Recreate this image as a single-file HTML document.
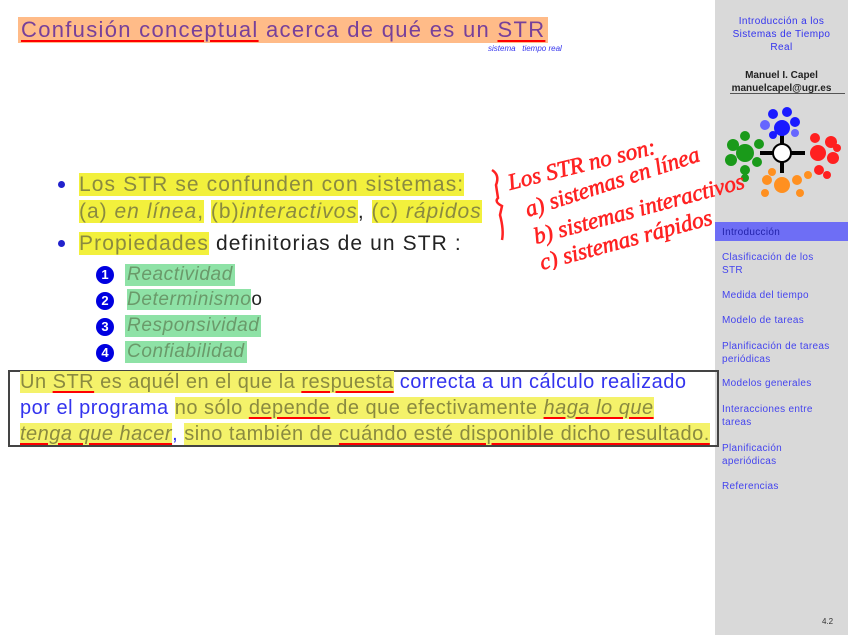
<!DOCTYPE html>
<html><head><meta charset="utf-8">
<style>
*{margin:0;padding:0;box-sizing:border-box}
body{width:848px;height:635px;overflow:hidden;background:#fff;font-family:"Liberation Sans",sans-serif;position:relative}
.abs{position:absolute;white-space:nowrap}
.side{position:absolute;left:715px;top:0;width:133px;height:635px;background:#d9d9d9}
.hlY{background:#f2f03c}
.hlG{background:#8ee2a6}
.ul{text-decoration:underline;text-decoration-color:#f00;text-decoration-thickness:2px;text-underline-offset:3px}
.nav{position:absolute;left:722px;font-size:10px;color:#4444ee;line-height:13px;letter-spacing:0.3px;white-space:nowrap}
.num{position:absolute;left:96px;width:18px;height:18px;border-radius:50%;background:#0000e0;color:#fff;font-size:13px;font-weight:bold;text-align:center;line-height:18px}
.en{position:absolute;left:125px;font-size:19px;font-style:italic;color:#6a9a6a;padding:0 2px;letter-spacing:0.6px;line-height:22px}
.bul{position:absolute;left:58px;width:7px;height:7px;border-radius:50%;background:#2222cc}
.box{position:absolute;left:8px;top:370px;width:711px;height:77px;border:2px solid #444}
.bl{position:absolute;left:20px;font-size:20px;color:#3333ee;white-space:nowrap;letter-spacing:0.5px;line-height:24px}
.y{background:#f4f26a;color:#8a8a40}
.bt{position:absolute;left:79px;font-size:21px;line-height:25px;letter-spacing:1.1px;white-space:nowrap}
</style></head><body>
<div class="side"></div>
<div class="abs" style="left:715px;width:133px;top:15px;text-align:center;font-size:10px;color:#3333ee;line-height:13px;letter-spacing:0.4px">Introducción a los<br>Sistemas de Tiempo<br>Real</div>
<div class="abs" style="left:715px;width:133px;top:69px;text-align:center;font-size:10px;color:#222;font-weight:bold;line-height:13px">Manuel I. Capel<br>manuelcapel@ugr.es</div>
<div class="abs" style="left:730px;top:93px;width:115px;height:1px;background:#555"></div>
<svg class="abs" style="left:715px;top:100px" width="133" height="100">
<g stroke="#000" stroke-width="4"><line x1="67" y1="35" x2="67" y2="73"/><line x1="45" y1="53" x2="90" y2="53"/></g>
<circle cx="67" cy="53" r="9" fill="#fff" stroke="#000" stroke-width="2"/>
<g fill="#1a1aff"><circle cx="67" cy="28" r="8"/><circle cx="58" cy="14" r="5"/><circle cx="72" cy="12" r="5"/><circle cx="80" cy="22" r="5"/><circle cx="50" cy="25" r="5" fill="#6666ff"/><circle cx="80" cy="33" r="4" fill="#6666ff"/><circle cx="58" cy="35" r="4"/></g>
<g fill="#1a9a1a"><circle cx="30" cy="53" r="9"/><circle cx="18" cy="45" r="6"/><circle cx="16" cy="60" r="6"/><circle cx="30" cy="36" r="5"/><circle cx="30" cy="70" r="5"/><circle cx="44" cy="44" r="5"/><circle cx="42" cy="62" r="5"/><circle cx="30" cy="78" r="4"/></g>
<g fill="#ff2020"><circle cx="103" cy="53" r="8"/><circle cx="116" cy="42" r="6"/><circle cx="118" cy="58" r="6"/><circle cx="100" cy="38" r="5"/><circle cx="104" cy="70" r="5"/><circle cx="112" cy="75" r="4"/><circle cx="122" cy="48" r="4"/></g>
<g fill="#ff9020"><circle cx="67" cy="85" r="8"/><circle cx="52" cy="80" r="5"/><circle cx="82" cy="80" r="5"/><circle cx="50" cy="93" r="4"/><circle cx="85" cy="93" r="4"/><circle cx="57" cy="72" r="4"/><circle cx="93" cy="75" r="4"/></g>
</svg>
<div class="abs" style="left:715px;top:222px;width:133px;height:19px;background:#6e6ef5"></div>
<div class="nav" style="top:226px;color:#2222aa">Introducción</div>
<div class="nav" style="top:251px">Clasificación de los<br>STR</div>
<div class="nav" style="top:289px">Medida del tiempo</div>
<div class="nav" style="top:314px">Modelo de tareas</div>
<div class="nav" style="top:340px">Planificación de tareas<br>periódicas</div>
<div class="nav" style="top:377px">Modelos generales</div>
<div class="nav" style="top:403px">Interacciones entre<br>tareas</div>
<div class="nav" style="top:442px">Planificación<br>aperiódicas</div>
<div class="nav" style="top:480px">Referencias</div>
<div class="abs" style="left:822px;top:617px;font-size:8px;color:#333">4.2</div>

<div class="abs" style="left:18px;top:17px;height:26px;width:530px;background:#ffbb88"></div>
<div class="abs" style="left:21px;top:16px;font-size:22px;color:#77409a;line-height:28px;letter-spacing:1.3px"><span class="ul">Confusión conceptual</span> acerca de qué es un <span class="ul">STR</span></div>
<div class="abs" style="left:488px;top:44px;font-size:8px;color:#3333ee;font-style:italic">sistema &nbsp; tiempo real</div>

<div class="bul" style="top:181px"></div>
<div class="bt" style="top:172px;color:#8a8a40"><span class="hlY">Los STR se confunden con sistemas:</span></div>
<div class="bt" style="top:199px;color:#8a8a40;letter-spacing:1px"><span class="hlY">(a) <i>en línea</i>,</span> <span class="hlY">(b)<i>interactivos</i></span><span style="color:#222">,</span> <span class="hlY">(c) <i>rápidos</i></span></div>
<div class="bul" style="top:240px"></div>
<div class="bt" style="top:231px;color:#222"><span class="hlY" style="color:#8a8a40">Propiedades</span> definitorias de un STR :</div>

<div class="num" style="top:266px">1</div><div class="en hlG" style="top:264px">Reactividad</div>
<div class="num" style="top:292px">2</div><div class="en" style="top:289px"><span class="hlG">Determinismo</span><span style="color:#222;font-style:normal">o</span></div>
<div class="num" style="top:318px">3</div><div class="en hlG" style="top:315px">Responsividad</div>
<div class="num" style="top:344px">4</div><div class="en hlG" style="top:341px">Confiabilidad</div>

<div class="box"></div>
<div class="bl" style="top:370px"><span class="y">Un <span class="ul">STR</span> es aquél en el que la <span class="ul">respuesta</span></span> correcta a un cálculo realizado</div>
<div class="bl" style="top:396px">por el programa <span class="y">no sólo <span class="ul">depende</span> de que efectivamente <i class="ul">haga lo que</i></span></div>
<div class="bl" style="top:422px"><span class="y"><i class="ul">tenga que hacer</i></span>, <span class="y">sino también de <span class="ul">cuándo esté disponible dicho resultado.</span></span></div>

<svg class="abs" style="left:480px;top:130px" width="320" height="140">
<path d="M12 40 Q20 45 16 55 L18 68 Q14 72 22 76 L20 85 Q24 100 22 110" stroke="#f22" stroke-width="2.5" fill="none"/>
<g fill="#f22" stroke="#f22" stroke-width="0.6" font-family="Liberation Serif,serif" font-style="italic">
<text x="30" y="60" font-size="23" transform="rotate(-14 30 60)">Los STR no son:</text>
<text x="48" y="87" font-size="23" transform="rotate(-18 48 87)">a) sistemas en línea</text>
<text x="56" y="114" font-size="23" transform="rotate(-15 56 114)">b) sistemas interactivos</text>
<text x="62" y="140" font-size="23" transform="rotate(-15 62 140)">c) sistemas rápidos</text>
</g>
</svg>
</body></html>
